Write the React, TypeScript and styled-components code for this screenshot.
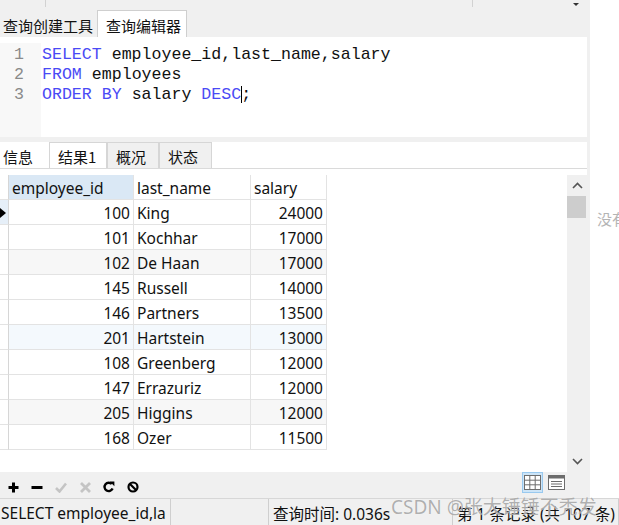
import React from 'react';
import styled, { createGlobalStyle } from 'styled-components';

const Global = createGlobalStyle`
  html, body { margin: 0; padding: 0; background: #fff; }
  body {
    width: 619px; height: 525px; overflow: hidden;
    font-family: "Noto Sans", "Noto Sans CJK SC", sans-serif;
    color: #000;
  }
  * { box-sizing: border-box; }
`;

const Page = styled.div`
  width: 619px; height: 525px; display: flex; flex-direction: column;
  background: #fff; position: relative; overflow: hidden;
`;
const Upper = styled.div`display: flex; height: 498px;`;
const AppPane = styled.div`
  width: 590px; background: #f0f0f0; display: flex; flex-direction: column;
`;
const Side = styled.div`
  flex: 1; overflow: hidden; white-space: nowrap; padding: 208px 0 0 7px;
  font-family: "Noto Sans CJK SC", sans-serif; font-size: 15px; color: #b4b4b4;
`;

const TopStrip = styled.div`display: flex; height: 10px; align-items: flex-start;`;
const TopCell = styled.div<{ $w: number }>`
  width: ${p => p.$w}px; height: 7px; border-right: 1px solid #d2d2d2;
`;
const TopArrow = styled.div`
  margin: 3px 0 0 100px; width: 0; height: 0;
  border-left: 3px solid transparent; border-right: 3px solid transparent; border-top: 3px solid #333;
`;

const EditorTabs = styled.div`display: flex; height: 27px; align-items: flex-end;`;
const EditorTab = styled.div<{ $active?: boolean; $w: number }>`
  width: ${p => p.$w}px; height: 27px; display: flex; align-items: center;
  padding: 3px 0 0 ${p => (p.$active ? 8 : 3)}px;
  font-family: "Noto Sans CJK SC", sans-serif; font-size: 15px; color: #111;
  background: ${p => (p.$active ? '#fff' : 'transparent')};
  border: ${p => (p.$active ? '1px solid #cfcfcf' : 'none')}; border-bottom: none;
`;

const Editor = styled.div`
  height: 100px; margin-right: 3px; background: #fff; display: flex; padding-top: 6px;
`;
const Gutter = styled.div`
  width: 41px; background: #f8f8f8; text-align: right; padding: 2px 17px 0 0;
  font-family: "Liberation Mono", monospace; font-size: 16.6px; line-height: 20px; color: #8a8a8a;
`;
const Code = styled.div`
  flex: 1; padding: 2px 0 0 1px; white-space: pre;
  font-family: "Liberation Mono", monospace; font-size: 16.6px; line-height: 20px; color: #111;
`;
const Kw = styled.span`color: #4a4af5;`;
const Caret = styled.span`
  display: inline-block; width: 0; height: 17px; border-left: 1px solid #000;
  vertical-align: -4px; margin-right: -1px;
`;

const Gap = styled.div`height: 5px;`;

const ResultPanel = styled.div`
  flex: 1; margin-right: 3px; background: #fff; display: flex; flex-direction: column;
`;
const ResultTabs = styled.div`
  height: 27px; display: flex; align-items: flex-start; border-bottom: 1px solid #dadada;
  background: #fff;
`;
const ResultTab = styled.div<{ $w: number; $kind: 'plain' | 'active' | 'idle' }>`
  width: ${p => p.$w}px; height: 26px; display: flex; align-items: center;
  padding: 2px 0 0 ${p => (p.$kind === 'plain' ? 3 : 8)}px;
  font-family: "Noto Sans CJK SC", sans-serif; font-size: 15px; color: #111;
  background: ${p => (p.$kind === 'idle' ? '#f0f0f0' : '#fff')};
  border: ${p => (p.$kind === 'plain' ? 'none' : '1px solid #d6d6d6')};
  border-bottom: none;
  margin-right: ${p => (p.$kind === 'plain' ? 1 : 0)}px;
`;

const GridArea = styled.div`flex: 1; display: flex; padding-top: 6px;`;
const GridScroll = styled.div`flex: 1; overflow: hidden;`;
const Table = styled.div`
  display: grid; grid-template-columns: 9px 125px 117px 76px; grid-auto-rows: 25px;
  font-size: 15.5px;
`;
const Cell = styled.div<{ $bg?: string; $align?: 'left' | 'right' }>`
  border-right: 1px solid #e3e3e3; border-bottom: 1px solid #e3e3e3;
  background: ${p => p.$bg || '#fff'};
  display: flex; align-items: center;
  justify-content: ${p => (p.$align === 'right' ? 'flex-end' : 'flex-start')};
  padding: ${p => (p.$align === 'right' ? '1px 3px 0 0' : '1px 0 0 3px')};
  white-space: nowrap; overflow: hidden; color: #111;
`;
const RowHead = styled.div<{ $bg?: string }>`
  border-right: 1px solid #d6d6d6; border-bottom: 1px solid #e3e3e3;
  background: ${p => p.$bg || '#fff'}; display: flex; align-items: center;
`;
const Pointer = styled.div`
  width: 0; height: 0; margin-top: 1px;
  border-top: 5px solid transparent; border-bottom: 5px solid transparent; border-left: 6px solid #000;
`;

const VScroll = styled.div`
  width: 20px; background: #f0f0f0; display: flex; flex-direction: column; align-items: stretch;
`;
const ScrollBtn = styled.div`height: 21px; display: flex; align-items: center; justify-content: center;`;
const Thumb = styled.div`height: 22px; background: #cdcdcd; margin-right: 1px;`;
const ScrollSpace = styled.div`flex: 1;`;

const Toolbar = styled.div`height: 26px; display: flex; align-items: flex-start;`;
const ToolIcons = styled.div`display: flex; padding: 8px 0 0 1px;`;
const ToolIcon = styled.div`width: 24px; height: 14px; display: flex; align-items: center; justify-content: center;`;
const ViewToggles = styled.div`margin-left: auto; margin-right: 23px; display: flex; align-items: flex-start; gap: 3px;`;
const ViewBtn = styled.div<{ $on?: boolean }>`
  width: 21px; height: 21px; display: flex; align-items: center; justify-content: center;
  background: ${p => (p.$on ? '#cce4f7' : 'transparent')};
  border: 1px solid ${p => (p.$on ? '#99c9ef' : 'transparent')};
`;

const StatusBar = styled.div`
  height: 27px; background: #f0f0f0; border-top: 1px solid #d7d7d7; display: flex;
  font-family: "Noto Sans", "Noto Sans CJK SC", sans-serif; font-size: 15.5px; position: relative;
`;
const StatusCell = styled.div<{ $w?: number; $pad?: number }>`
  ${p => (p.$w ? `width: ${p.$w}px;` : 'flex: 1;')}
  display: flex; align-items: center; padding: 2px 0 0 ${p => p.$pad ?? 4}px;
  border-right: 1px solid #cfcfcf; white-space: nowrap; overflow: hidden; color: #111;
`;
const Watermark = styled.div`
  position: absolute; left: 391px; top: -7px; white-space: nowrap;
  font-family: "Noto Sans", "Noto Sans CJK SC", sans-serif; font-size: 19px;
  color: rgba(150, 150, 150, 0.75); pointer-events: none;
  text-shadow: 0 0 1px rgba(255,255,255,0.9);
`;

type Row = { id: number; name: string; salary: number; bg?: string };
const rows: Row[] = [
  { id: 100, name: 'King', salary: 24000 },
  { id: 101, name: 'Kochhar', salary: 17000 },
  { id: 102, name: 'De Haan', salary: 17000, bg: '#f7f7f7' },
  { id: 145, name: 'Russell', salary: 14000 },
  { id: 146, name: 'Partners', salary: 13500 },
  { id: 201, name: 'Hartstein', salary: 13000, bg: '#f4f9fd' },
  { id: 108, name: 'Greenberg', salary: 12000 },
  { id: 147, name: 'Errazuriz', salary: 12000 },
  { id: 205, name: 'Higgins', salary: 12000, bg: '#f7f7f7' },
  { id: 168, name: 'Ozer', salary: 11500 },
];

const Chevron = ({ up }: { up?: boolean }) => (
  <svg width="11" height="7" viewBox="0 0 11 7">
    <path d={up ? 'M1 6 L5.5 1.5 L10 6' : 'M1 1 L5.5 5.5 L10 1'} fill="none" stroke="#555" strokeWidth="1.6" />
  </svg>
);

export default function App() {
  return (
    <Page>
      <Global />
      <Upper>
        <AppPane>
          <TopStrip>
            <TopCell $w={46} />
            <TopCell $w={427} />
            <TopArrow />
          </TopStrip>
          <EditorTabs>
            <EditorTab $w={97}>查询创建工具</EditorTab>
            <EditorTab $w={90} $active>查询编辑器</EditorTab>
          </EditorTabs>
          <Editor>
            <Gutter>1<br />2<br />3</Gutter>
            <Code>
              <Kw>SELECT</Kw> employee_id,last_name,salary{'\n'}
              <Kw>FROM</Kw> employees{'\n'}
              <Kw>ORDER BY</Kw> salary <Kw>DESC</Kw><Caret />;
            </Code>
          </Editor>
          <Gap />
          <ResultPanel>
            <ResultTabs>
              <ResultTab $w={48} $kind="plain">信息</ResultTab>
              <ResultTab $w={58} $kind="active">结果1</ResultTab>
              <ResultTab $w={52} $kind="idle">概况</ResultTab>
              <ResultTab $w={53} $kind="idle">状态</ResultTab>
            </ResultTabs>
            <GridArea>
              <GridScroll>
                <Table>
                  <RowHead />
                  <Cell $bg="#dae8f5">employee_id</Cell>
                  <Cell>last_name</Cell>
                  <Cell>salary</Cell>
                  {rows.map((r, i) => (
                    <React.Fragment key={i}>
                      <RowHead $bg={i === 0 ? '#e6eff8' : undefined}>{i === 0 && <Pointer />}</RowHead>
                      <Cell $bg={r.bg} $align="right">{r.id}</Cell>
                      <Cell $bg={r.bg}>{r.name}</Cell>
                      <Cell $bg={r.bg} $align="right">{r.salary}</Cell>
                    </React.Fragment>
                  ))}
                </Table>
              </GridScroll>
              <VScroll>
                <ScrollBtn><Chevron up /></ScrollBtn>
                <Thumb />
                <ScrollSpace />
                <ScrollBtn><Chevron /></ScrollBtn>
              </VScroll>
            </GridArea>
          </ResultPanel>
          <Toolbar>
            <ToolIcons>
              <ToolIcon>
                <svg width="11" height="11" viewBox="0 0 11 11"><path d="M5.5 0.5 V10.5 M0.5 5.5 H10.5" stroke="#000" strokeWidth="3" /></svg>
              </ToolIcon>
              <ToolIcon>
                <svg width="12" height="11" viewBox="0 0 12 11"><path d="M0.5 5.5 H11.5" stroke="#000" strokeWidth="3" /></svg>
              </ToolIcon>
              <ToolIcon>
                <svg width="12" height="11" viewBox="0 0 12 11"><path d="M1 6 L4.5 9.5 L11 1.5" fill="none" stroke="#c4c4c4" strokeWidth="2.6" /></svg>
              </ToolIcon>
              <ToolIcon>
                <svg width="11" height="11" viewBox="0 0 11 11"><path d="M1 1 L10 10 M10 1 L1 10" stroke="#c4c4c4" strokeWidth="2.8" /></svg>
              </ToolIcon>
              <ToolIcon>
                <svg width="12" height="12" viewBox="0 0 12 12">
                  <path d="M9.6 7.6 A4.2 4.2 0 1 1 8.8 3" fill="none" stroke="#000" strokeWidth="2.4" />
                  <path d="M6.8 0.6 L11.4 0.6 L11.4 5.2 Z" fill="#000" />
                </svg>
              </ToolIcon>
              <ToolIcon>
                <svg width="12" height="12" viewBox="0 0 12 12">
                  <circle cx="6" cy="6" r="4.5" fill="none" stroke="#000" strokeWidth="2.2" />
                  <path d="M3 3 L9 9" stroke="#000" strokeWidth="2.2" />
                </svg>
              </ToolIcon>
            </ToolIcons>
            <ViewToggles>
              <ViewBtn $on>
                <svg width="17" height="15" viewBox="0 0 17 15">
                  <rect x="0.5" y="0.5" width="16" height="14" fill="#fff" stroke="#6d6d6d" />
                  <path d="M0.5 5.2 H16.5 M0.5 9.8 H16.5 M5.8 0.5 V14.5 M11.2 0.5 V14.5" stroke="#6d6d6d" />
                </svg>
              </ViewBtn>
              <ViewBtn>
                <svg width="17" height="15" viewBox="0 0 17 15">
                  <rect x="0.5" y="0.5" width="16" height="14" fill="#fff" stroke="#6d6d6d" />
                  <rect x="0.5" y="0.5" width="16" height="3" fill="#6d6d6d" />
                  <path d="M3 6.5 H14 M3 9 H14 M3 11.5 H14" stroke="#6d6d6d" />
                </svg>
              </ViewBtn>
            </ViewToggles>
          </Toolbar>
        </AppPane>
        <Side>没有</Side>
      </Upper>
      <StatusBar>
        <StatusCell $w={171} $pad={1}>SELECT employee_id,la</StatusCell>
        <StatusCell $w={98} />
        <StatusCell $w={184}>查询时间: 0.036s</StatusCell>
        <StatusCell>第 1 条记录 (共 107 条)</StatusCell>
        <Watermark>CSDN @张大锤锤不秃发</Watermark>
      </StatusBar>
    </Page>
  );
}
